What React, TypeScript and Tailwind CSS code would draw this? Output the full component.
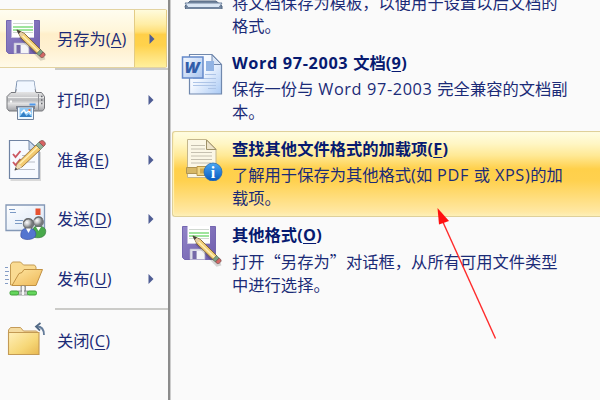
import type { ReactNode } from "react";

function SaveIcon({ id }: { id: string }) {
  return (
    <svg width="44" height="44" viewBox="0 0 44 44">
      <defs>
        <linearGradient id={id} x1="0" y1="0" x2="1" y2="1">
          <stop offset="0" stopColor="#9184c8" />
          <stop offset="1" stopColor="#6f5dac" />
        </linearGradient>
      </defs>
      <path d="M1.5 3.5h33v33h-31l-2-2z" fill={`url(#${id})`} stroke="#7466b0" />
      <path d="M6.500 3h22.500v18H6.500z" fill="#fff" />
      <path d="M7 20.5h22" stroke="#cfcbe2" />
      <path d="M8 6.5h20M8 15.500h20" stroke="#d0d8d0" />
      <path d="M8 10h20M8 13h20" stroke="#41c93d" strokeWidth="1.200" />
      <path d="M9 26h15v10.500H9z" fill="#dedee8" stroke="#b7b3ce" strokeWidth=".6" />
      <path d="M11.500 28h4v8h-4z" fill="#7568a8" />
      <path d="M16 28h7v8h-7z" fill="#f4f4f8" />
      <path d="M15 20 36 42l4-1" fill="none" stroke="#000" strokeOpacity=".15" strokeWidth="3" />
      <path d="m12 13 7.500 3.500L36 33l-3.500 4L16 21z" fill="#f3cf78" stroke="#7c6034" strokeWidth=".9" />
      <path d="m17.500 18.800 16.500 16" stroke="#fff0b8" strokeWidth="1.400" />
      <path d="m12 13 7 3.700-3 3.500z" fill="#e6cfa8" />
      <path d="m11.500 12.500 4.500 2-2.500 2.500z" fill="#45423c" />
      <path d="m35.500 32.500 2.600 2.500-3.700 4-2.600-2.500z" fill="#7da184" stroke="#4d674f" strokeWidth=".6" />
      <path d="m38.200 35 1.600 1.600c1.200 1.700-1.700 4.700-3.600 3.800l-1.700-1.400z" fill="#d66765" stroke="#72504c" strokeWidth=".8" />
    </svg>
  );
}

function PrintIcon() {
  return (
    <svg width="44" height="44" viewBox="0 0 44 44">
      <defs>
        <linearGradient id="printer" x1="0" y1="0" x2="0" y2="1">
          <stop offset="0" stopColor="#f1f1f1" />
          <stop offset=".5" stopColor="#b9babd" />
          <stop offset=".65" stopColor="#e2e2e3" />
          <stop offset="1" stopColor="#a0a1a5" />
        </linearGradient>
      </defs>
      <path d="M12 3h17l2 14H10z" fill="#f5faff" stroke="#7d93b2" />
      <path d="M6 14.500h4.500l1-3h18.500l1 3h5.500l3 4v12l-2 2.500H4l-2-2.500v-12z" fill="url(#printer)" stroke="#77787c" />
      <path d="M12.500 3.500h16.500l1 10.500H11.500z" fill="#f1f7ff" />
      <path d="M3 19.500h36" stroke="#fff" strokeOpacity=".7" />
      <path d="M33.500 16v17" stroke="#919297" />
      <path d="M36 18.500h1.500M36 22h1.500M36 25.500h1.500" stroke="#65676d" strokeWidth="1.300" />
      <path d="M5 23.500h2" stroke="#fff" strokeWidth="2" />
      <path d="M11 28h19v3H11z" fill="#808188" />
      <path d="M12.500 29h16v12.500h-16z" fill="#eff8ff" stroke="#70819b" />
      <path d="M14.500 30h12.500v9H14.500z" fill="#8fc9f6" />
      <path d="m14.500 39 4-5 3 4 2-2 3.500 3z" fill="#337fc5" />
      <path d="m16 35 3-3 2 3 3-2 2 3" fill="none" stroke="#fff" strokeWidth="1.300" />
      <path d="M23.500 32h2" stroke="#f17a48" strokeWidth="2" />
      <path d="M24.500 26.500h6" stroke="#4e98eb" strokeWidth="2" />
    </svg>
  );
}

function PrepareIcon() {
  return (
    <svg width="44" height="44" viewBox="0 0 44 44">
      <path d="M5.500 42h29.500V14" fill="none" stroke="#000" strokeOpacity=".13" strokeWidth="2" />
      <path d="M4.500 2.500h19l10.500 9.500v28.500H4.500z" fill="#f7faff" stroke="#6f83a3" strokeWidth="1.200" />
      <path d="M24 3v9h9.500z" fill="#cbdaf0" stroke="#7d90ad" />
      <path d="M17 17.500h8M21 24h9M11 31.500h19" stroke="#b9bec8" />
      <path d="m8 16 2.500 3 5-6M8 24l2.500 3 5-6" fill="none" stroke="#cb5863" strokeWidth="1.900" />
      <path d="m10 32 3-7.500L31 7l4.500 4.500L17 29z" fill="#f3ca70" stroke="#936e35" strokeWidth=".9" />
      <path d="M14.500 26 32.500 9" stroke="#fff0b5" strokeWidth="1.500" />
      <path d="m10 32 3-7 4 4z" fill="#efdbb5" />
      <path d="m9.500 32.500 1.200-3 1.800 1.800z" fill="#3e4455" />
      <path d="m31 7 3-3 4.500 4.500-3 3z" fill="#91b298" stroke="#668069" strokeWidth=".7" />
      <path d="m34 4 2-1.200c2-1.300 5.500 2.200 4 4.200L38.500 8.500z" fill="#d76363" stroke="#7c5451" strokeWidth=".8" />
    </svg>
  );
}

function SendIcon() {
  return (
    <svg width="44" height="44" viewBox="0 0 44 44">
      <defs>
        <linearGradient id="letter" x1="0" y1="0" x2="1" y2="1">
          <stop stopColor="#fff" />
          <stop offset="1" stopColor="#d8e5f5" />
        </linearGradient>
        <radialGradient id="head" cx=".35" cy=".35">
          <stop stopColor="#fff" />
          <stop offset=".5" stopColor="#c6c8ca" />
          <stop offset="1" stopColor="#75787b" />
        </radialGradient>
      </defs>
      <path d="M1 8h38.500v25.500H1z" fill="url(#letter)" stroke="#8498b6" strokeWidth="1.300" />
      <path d="M4 12.500h6M5 15.500h6M10 23.500h8M10 26.500h7" stroke="#7b9ac5" />
      <path d="M30.500 11.500h5v6.500h-5z" fill="#e65130" />
      <path d="M28 40c-2-8 1-11 5-11s9 2 7.500 7c-1 5-8 5.500-12.500 4z" fill="#48a94b" stroke="#37793e" strokeWidth=".7" />
      <circle cx="33.500" cy="25" r="5" fill="url(#head)" stroke="#696b6e" strokeWidth=".7" />
      <path d="m31 30 2.500 4 2.500-4z" fill="#fff" />
      <path d="M16 40c-1-6 2-9 7-9s9 3 7.500 8c-2 4.500-12.500 4.500-14.500 1z" fill="#5475cf" stroke="#3c50a0" strokeWidth=".7" />
      <circle cx="23.500" cy="27" r="5.200" fill="url(#head)" stroke="#606366" strokeWidth=".8" />
      <path d="M18.500 25c2-4 7-4.500 9.500-1M29.500 22.500c2-3.500 6-3.500 8-.5" fill="none" stroke="#696b6d" strokeWidth="1.200" />
      <path d="m21 31.500 2.500 4.500 2.500-4.500z" fill="#fff" />
    </svg>
  );
}

function PublishIcon() {
  return (
    <svg width="44" height="44" viewBox="0 0 44 44">
      <defs>
        <linearGradient id="open-folder" x1="0" y1="0" x2="1" y2="1">
          <stop stopColor="#ffe6a2" />
          <stop offset="1" stopColor="#eeb857" />
        </linearGradient>
      </defs>
      <path d="M0 10.500h3M0 14.500h4M0 18.500h3M0 22.500h4M0 26.500h3" stroke="#849cc5" />
      <path d="M5.500 28V7.500l2-2.500h8l3 3h11l1.500 2v18z" fill="#fadb92" stroke="#c49b52" />
      <path d="m7 28.500 7-12 3-1 2-3h18.500L31 28.500z" fill="url(#open-folder)" stroke="#c19143" />
      <path d="M16 29h4.500v5H16zM13 34h10v4H13z" fill="#c4c5c6" stroke="#85898c" strokeWidth=".8" />
      <rect x="5" y="34" width="8.500" height="4" rx="1.500" fill="#64d65c" stroke="#3e9f39" />
      <rect x="22.500" y="34" width="9" height="4" rx="1.500" fill="#64d65c" stroke="#3e9f39" />
      <path d="M18 29v9" stroke="#f7f7f7" strokeWidth="2" />
    </svg>
  );
}

function CloseIcon() {
  return (
    <svg width="44" height="44" viewBox="0 0 44 44">
      <defs>
        <linearGradient id="closed-folder" x1="0" y1="0" x2="1" y2="1">
          <stop stopColor="#ffefb9" />
          <stop offset=".6" stopColor="#f6d777" />
          <stop offset="1" stopColor="#e8b851" />
        </linearGradient>
      </defs>
      <path d="M3.500 35V11l2-2.500h10l3 3.500h13l2 2v21z" fill="#f4dba0" stroke="#c59b58" />
      <path d="M3.500 13.500h30.500v22H3.500z" fill="url(#closed-folder)" stroke="#c39a54" strokeWidth="1.100" />
      <path d="M32 7.500c4.500 0 7 3 7 8.500" fill="none" stroke="#647c9a" strokeWidth="1.800" />
      <path d="m35.500 4-4.500 3.500 4 4" fill="none" stroke="#526985" strokeWidth="1.800" />
    </svg>
  );
}

function TemplateIcon() {
  return (
    <svg width="44" height="44" viewBox="0 0 44 44">
      <path d="m4 41 5-5h26l6 5v5l-5 3H10l-5-3z" fill="#72859e" stroke="#526680" />
      <path d="m4 38 3 4.500h31l3-4.500z" fill="#dbe7f5" stroke="#6e829d" />
    </svg>
  );
}

function WordIcon() {
  return (
    <svg width="44" height="44" viewBox="0 0 44 44">
      <defs>
        <linearGradient id="word-page" x1="0" y1="0" x2="1" y2="1">
          <stop stopColor="#fff" />
          <stop offset=".45" stopColor="#f2f7ff" />
          <stop offset="1" stopColor="#a9c9f4" />
        </linearGradient>
        <linearGradient id="word-badge" x1="0" y1="0" x2="1" y2="1">
          <stop stopColor="#f3f8ff" />
          <stop offset="1" stopColor="#a9c4ee" />
        </linearGradient>
      </defs>
      <path d="M8.500 3.500h22.500l9.500 10V43h-32z" fill="url(#word-page)" stroke="#7088ad" strokeWidth="1.200" />
      <path d="M31 4v9.500h9.500z" fill="#dbe7f7" stroke="#7188ad" />
      <path d="M25 10h8v10h-8z" fill="#91b3e3" />
      <path d="M24 23.500h11M12 27.500h23M12 31.500h23M12 34.500h23M27 37.500h8" stroke="#adc4e7" strokeWidth="1.200" />
      <path d="M1.500 6h20.500v21H1.500z" fill="url(#word-badge)" stroke="#6489ca" strokeWidth="1.500" />
      <text x="3.500" y="22" textLength="15" lengthAdjust="spacingAndGlyphs" fontFamily="Open Sans, sans-serif" fontStyle="italic" fontWeight="800" fontSize="15.500" fill="#315daa">W</text>
    </svg>
  );
}

function AddInIcon() {
  return (
    <svg width="44" height="44" viewBox="0 0 44 44">
      <defs>
        <linearGradient id="info" x1="0" y1="0" x2="0" y2="1">
          <stop stopColor="#4ba8f4" />
          <stop offset="1" stopColor="#0758bd" />
        </linearGradient>
      </defs>
      <path d="M6.500 2.500h19l9.500 9.500v28.500H6.500z" fill="#fbf7e6" stroke="#c3b68c" />
      <path d="M25.500 3v9.500H35z" fill="#eee4c9" stroke="#9e9168" />
      <path d="M10 8.500h14M10 12h14M10 15.500h21M10 19h21M10 22.500h21M10 26h20" stroke="#c5c0b0" />
      <path d="M5.500 30.500h12v6h-12z" fill="#d7b866" stroke="#b09552" />
      <path d="M16 29.500h13v9H16z" fill="#f0d582" stroke="#b8964a" />
      <path d="M19 31.500h8v5h-8z" fill="#d3ab4f" />
      <circle cx="32" cy="35" r="9" fill="url(#info)" stroke="#2869ae" strokeWidth=".8" />
      <text x="32" y="40.500" textAnchor="middle" fontFamily="Liberation Serif, serif" fontWeight="700" fontSize="16" fill="#fff">i</text>
    </svg>
  );
}

const commands = [
  { label: "另存为", accessKey: "A", icon: <SaveIcon id="save-menu" />, height: "h-[59px]", submenu: true, active: true },
  { label: "打印", accessKey: "P", icon: <PrintIcon />, height: "h-[60px]", submenu: true },
  { label: "准备", accessKey: "E", icon: <PrepareIcon />, height: "h-[59px]", submenu: true },
  { label: "发送", accessKey: "D", icon: <SendIcon />, height: "h-[60px]", submenu: true },
  { label: "发布", accessKey: "U", icon: <PublishIcon />, height: "h-[59px]", submenu: true },
  { label: "关闭", accessKey: "C", icon: <CloseIcon />, height: "h-[61px]" },
];

function Key({ children }: { children: string }) {
  return (
    <span className="tracking-[0.3px]">
      (<span className="underline decoration-1 underline-offset-2">{children}</span>)
    </span>
  );
}

function Latin({ children }: { children: string }) {
  return <span className="whitespace-pre tracking-[0.62px]">{children}</span>;
}

function Divider() {
  return <div className="ml-[55px] h-[2px] bg-[#cbcbc8]" />;
}

function Command({ label, accessKey, icon, height, submenu, active }: (typeof commands)[number]) {
  return (
    <div
      className={`mr-[1px] flex ${height} items-center pl-[5px] ${
        active
          ? "rounded-r-[2px] border-y border-[#e3d3a1] bg-[linear-gradient(180deg,#fffdf0_0%,#fff6da_36%,#ffefca_42%,#fff1d2_70%,#fffae8_100%)]"
          : ""
      }`}
    >
      <div className="w-[52px] shrink-0">{icon}</div>
      <span className="flex-1 whitespace-nowrap">
        {label}
        <Key>{accessKey}</Key>
      </span>
      {submenu && (
        <div
          className={`flex h-full w-[33px] items-center pl-[14px] ${
            active
              ? "border-x border-[#e3cc85] bg-[linear-gradient(180deg,#fffbdc_0%,#ffeda5_25%,#ffdf78_38%,#ffcf48_43%,#ffd24c_62%,#ffe27a_82%,#fff09c_100%)]"
              : ""
          }`}
        >
          <svg width="6" height="10" viewBox="0 0 6 10">
            <path d="M.5 0 5.500 5 .5 10z" fill="#4f5d94" />
          </svg>
        </div>
      )}
    </div>
  );
}

type FormatProps = { icon: ReactNode; title?: ReactNode; lines: ReactNode[]; active?: boolean };

function Format({ icon, title, lines, active }: FormatProps) {
  return (
    <div
      className={`ml-[2px] flex h-[86px] shrink-0 rounded-l-[3px] border-y border-l pl-[8px] ${
        active
          ? "border-[#dfd09a] bg-[linear-gradient(180deg,#fffde2_0%,#fff6c4_14%,#ffe995_28%,#ffd967_38%,#ffd04a_44%,#ffd14f_58%,#ffdc78_76%,#ffe8a3_95%,#fdf0b8_100%)] shadow-[inset_1px_0_1px_#fff3b8]"
          : "border-transparent"
      }`}
    >
      <div className="w-[51px] shrink-0 pt-[5px]">{icon}</div>
      <div className="whitespace-nowrap pt-[6px]">
        <h2 className="h-[26px] font-bold leading-[23px] text-[#071a70]">{title}</h2>
        {lines.map((line, i) => (
          <p key={i} className="leading-[23px]">{line}</p>
        ))}
      </div>
    </div>
  );
}

export default function App() {
  return (
    <main
      lang="zh-CN"
      className="relative flex h-[400px] w-[600px] overflow-hidden bg-[#fafafa] font-['Open_Sans','Noto_Sans_CJK_SC',sans-serif] text-[16.3px] leading-[24px] text-[#1b2b77]"
    >
      <nav className="w-[168px] shrink-0 pt-[9px]">
        {commands.map((command, i) => (
          <div key={command.accessKey}>
            {(i === 1 || i === 5) && <Divider />}
            <Command {...command} />
          </div>
        ))}
      </nav>
      <div className="w-[3px] shrink-0 border-r border-[#cccccc] bg-[#8b8b8b]" />
      <section className="-ml-[1px] -mt-[41px] flex flex-1 flex-col">
        <Format icon={<TemplateIcon />} lines={["将文档保存为模板，以便用于设置以后文档的", "格式。"]} />
        <Format
          icon={<WordIcon />}
          title={<><Latin>Word 97-2003 </Latin>文档<Key>9</Key></>}
          lines={[<>保存一份与<Latin> Word 97-2003 </Latin>完全兼容的文档副</>, "本。"]}
        />
        <Format
          active
          icon={<AddInIcon />}
          title={<>查找其他文件格式的加载项<Key>F</Key></>}
          lines={[<>了解用于保存为其他格式(如<Latin> PDF </Latin>或<Latin> XPS)</Latin>的加</>, "载项。"]}
        />
        <Format
          icon={<SaveIcon id="save-format" />}
          title={<>其他格式<Key>O</Key></>}
          lines={[
            <span className="font-['Noto_Sans_CJK_SC',sans-serif]">打开“另存为”对话框，从所有可用文件类型</span>,
            "中进行选择。",
          ]}
        />
      </section>
      <svg className="absolute left-[430px] top-[200px]" width="75" height="145" viewBox="0 0 75 145">
        <path d="M12 20 65.500 138.500" stroke="#ff2b2b" strokeWidth="1.400" />
        <path d="m7.500 8 11.500 13-10 3.500z" fill="#ff1010" />
      </svg>
    </main>
  );
}
